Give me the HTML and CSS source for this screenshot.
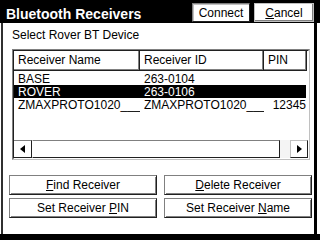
FILE: index.html
```html
<!DOCTYPE html>
<html lang="en">

<head>
    <meta charset="UTF-8">
    <meta name="viewport" content="width=device-width, initial-scale=1.0">
    <title>Bluetooth Receivers</title>

    <link rel="stylesheet" href="styles.css">
</head>

<body>

    <div class="screen">
        <header class="titlebar">
            <h1 class="titlebar--title">Bluetooth Receivers</h1>
            <div class="titlebar--actions">
                <button class="tb-btn tb-btn--default">Connect</button>
                <button class="tb-btn"><u>C</u>ancel</button>
            </div>
        </header>

        <main class="dialog">
            <p class="prompt">Select Rover BT Device</p>

            <div class="listview">
                <div class="listview--inner">
                    <div class="lv-head">
                        <div class="lv-cell lv-cell--name">Receiver Name</div>
                        <div class="lv-cell lv-cell--id">Receiver ID</div>
                        <div class="lv-cell lv-cell--pin">PIN</div>
                    </div>
                    <ul class="lv-body">
                        <li class="lv-row">
                            <span class="lv-cell lv-cell--name">BASE</span>
                            <span class="lv-cell lv-cell--id">263-0104</span>
                            <span class="lv-cell lv-cell--pin"></span>
                        </li>
                        <li class="lv-row selected">
                            <span class="lv-cell lv-cell--name">ROVER</span>
                            <span class="lv-cell lv-cell--id">263-0106</span>
                            <span class="lv-cell lv-cell--pin"></span>
                        </li>
                        <li class="lv-row">
                            <span class="lv-cell lv-cell--name">ZMAXPROTO1020___</span>
                            <span class="lv-cell lv-cell--id">ZMAXPROTO1020___</span>
                            <span class="lv-cell lv-cell--pin">12345</span>
                        </li>
                    </ul>
                    <div class="hscroll">
                        <span class="hscroll--btn"><i class="arrow arrow--left"></i></span>
                        <span class="hscroll--thumb"></span>
                        <span class="hscroll--track"></span>
                        <span class="hscroll--btn hscroll--btn-right"><i class="arrow arrow--right"></i></span>
                    </div>
                </div>
            </div>

            <div class="actions">
                <button class="btn"><u>F</u>ind Receiver</button>
                <button class="btn"><u>D</u>elete Receiver</button>
                <button class="btn">Set Receiver <u>P</u>IN</button>
                <button class="btn">Set Receiver <u>N</u>ame</button>
            </div>
        </main>

        <div class="bottom-edge"></div>
    </div>

</body>

</html>
```

FILE: styles.css
```css
/* Variables */
:root {
    --color-black: #000000;
    --color-white: #ffffff;
    --color-shadow: #808080;
    --color-light: #c0c0c0;
    --color-dark: #202020;
}

/* Base */
* {
    box-sizing: border-box;
}

body {
    margin: 0;
    background-color: var(--color-white);
    font-family: "Liberation Sans", Arial, sans-serif;
    font-size: 12px;
    color: var(--color-black);
}

button {
    font-family: inherit;
    font-size: 12px;
    color: var(--color-black);
    padding: 0;
    margin: 0;
    cursor: pointer;
}

u {
    text-underline-offset: 1px;
}

ul {
    margin: 0;
    padding: 0;
    list-style: none;
}

.screen {
    width: 320px;
    height: 240px;
    overflow: hidden;
}

/* Title bar */
.titlebar {
    display: flex;
    justify-content: space-between;
    height: 23px;
    background-color: var(--color-black);
    padding: 0 6px 0 6px;
}

.titlebar--title {
    margin: 0;
    padding-top: 6px;
    font-size: 14px;
    line-height: 16px;
    font-weight: bold;
    color: var(--color-white);
}

.titlebar--actions {
    display: flex;
    gap: 4px;
    padding-top: 3px;
}

.tb-btn {
    height: 19px;
    width: 60px;
    padding-top: 2px;
    line-height: 15px;
    background-color: var(--color-white);
    border: 1px solid var(--color-light);
    box-shadow: inset -1px -1px var(--color-shadow);
}

.tb-btn--default {
    width: 58px;
    border-color: var(--color-shadow) var(--color-dark) var(--color-dark) var(--color-shadow);
    box-shadow: inset 1px 1px var(--color-light);
}

/* Dialog */
.dialog {
    height: 211px;
    margin: 0 3px 0 1px;
    border-left: 2px solid #303030;
    border-right: 3px solid var(--color-black);
}

.prompt {
    margin: 0;
    padding: 5px 0 0 9px;
    line-height: 14px;
}

/* List view */
.listview {
    width: 298px;
    height: 111px;
    margin: 7px 0 0 9px;
    border: 1px solid;
    border-color: var(--color-shadow) var(--color-light) var(--color-light) var(--color-shadow);
}

.listview--inner {
    display: flex;
    flex-direction: column;
    height: 100%;
    border: 1px solid;
    border-color: var(--color-dark) var(--color-white) var(--color-white) var(--color-dark);
}

.lv-head {
    display: flex;
    height: 20px;
}

.lv-head .lv-cell {
    height: 20px;
    line-height: 18px;
    border-right: 1px solid var(--color-dark);
    border-bottom: 1px solid var(--color-dark);
    box-shadow: inset -1px -1px var(--color-shadow);
}

.lv-head .lv-cell--pin {
    flex: 0 0 43px;
}

.lv-cell {
    display: block;
    padding-left: 4px;
    white-space: nowrap;
    overflow: hidden;
}

.lv-cell--name {
    flex: 0 0 126px;
}

.lv-cell--id {
    flex: 0 0 124px;
}

.lv-cell--pin {
    flex: 0 0 42px;
}

.lv-body {
    flex: 1;
    padding-top: 1px;
}

.lv-row {
    display: flex;
    height: 13px;
    width: 292px;
}

.lv-row .lv-cell {
    height: 14px;
    padding-top: 1px;
    line-height: 13px;
}

.lv-row .lv-cell--pin {
    padding-left: 0;
    text-align: right;
}

.lv-row.selected {
    background-color: var(--color-black);
    color: var(--color-white);
}

/* Scrollbar */
.hscroll {
    display: flex;
    height: 18px;
}

.hscroll--btn {
    display: flex;
    align-items: center;
    justify-content: center;
    flex: 0 0 18px;
    border-top: 1px solid var(--color-shadow);
    border-right: 1px solid var(--color-dark);
    border-bottom: 1px solid var(--color-dark);
}

.hscroll--btn-right {
    border: 1px solid;
    border-color: var(--color-light) var(--color-dark) var(--color-dark) var(--color-light);
}

.hscroll--thumb {
    flex: 0 0 248px;
    border: 1px solid;
    border-color: var(--color-shadow) var(--color-dark) var(--color-dark) var(--color-white);
}

.hscroll--track {
    flex: 1;
    background-color: #f4f4f4;
}

.arrow {
    display: block;
    width: 0;
    height: 0;
    border-top: 4px solid transparent;
    border-bottom: 4px solid transparent;
}

.arrow--left {
    border-right: 5px solid var(--color-black);
}

.arrow--right {
    border-left: 5px solid var(--color-black);
}

/* Buttons */
.actions {
    display: grid;
    grid-template-columns: 148px 148px;
    column-gap: 7px;
    row-gap: 3px;
    margin: 15px 0 0 6px;
}

.btn {
    height: 20px;
    line-height: 18px;
    background-color: var(--color-white);
    border: 1px solid;
    border-color: var(--color-shadow) var(--color-dark) var(--color-dark) var(--color-shadow);
    box-shadow: inset 1px 1px var(--color-white), inset -1px -1px var(--color-shadow);
}

.bottom-edge {
    height: 6px;
    background-color: var(--color-black);
}
```
